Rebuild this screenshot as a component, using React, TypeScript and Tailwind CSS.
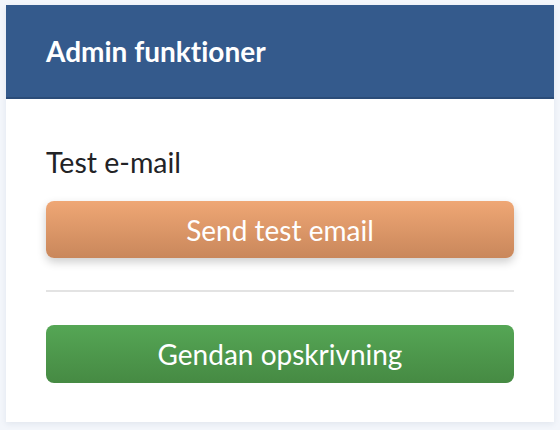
export default function App() {
  return (
    <div className="min-h-[430px] w-[560px] bg-[#f3f6fb] pl-[6px] pt-[5px] font-['Lato',sans-serif] [font-variant-ligatures:none]">
      <div className="w-[548px] bg-white pb-[39px] shadow-[0_2px_6px_rgba(30,50,90,0.08)]">
        <div className="flex h-[94px] items-center border-b-2 border-[#2b4c78] bg-[#345a8c] px-10">
          <h2 className="text-[28px] font-bold text-white">Admin funktioner</h2>
        </div>
        <div className="px-10 pt-[46px]">
          <p className="text-[28.5px] leading-[34px] text-[#222326]">Test e-mail</p>
          <button className="mt-[22px] flex h-[57px] w-full items-center justify-center rounded-lg bg-gradient-to-b from-[#efa775] to-[#c9875b] text-[28px] text-white shadow-[0_4px_10px_rgba(0,0,0,0.2)]">
            Send test email
          </button>
          <hr className="mt-[32px] border-t-2 border-[#e3e3e3]" />
          <button className="mt-[33px] flex h-[58px] w-full items-center justify-center rounded-lg bg-gradient-to-b from-[#55a655] to-[#468a43] text-[28px] text-white">
            Gendan opskrivning
          </button>
        </div>
      </div>
    </div>
  );
}
